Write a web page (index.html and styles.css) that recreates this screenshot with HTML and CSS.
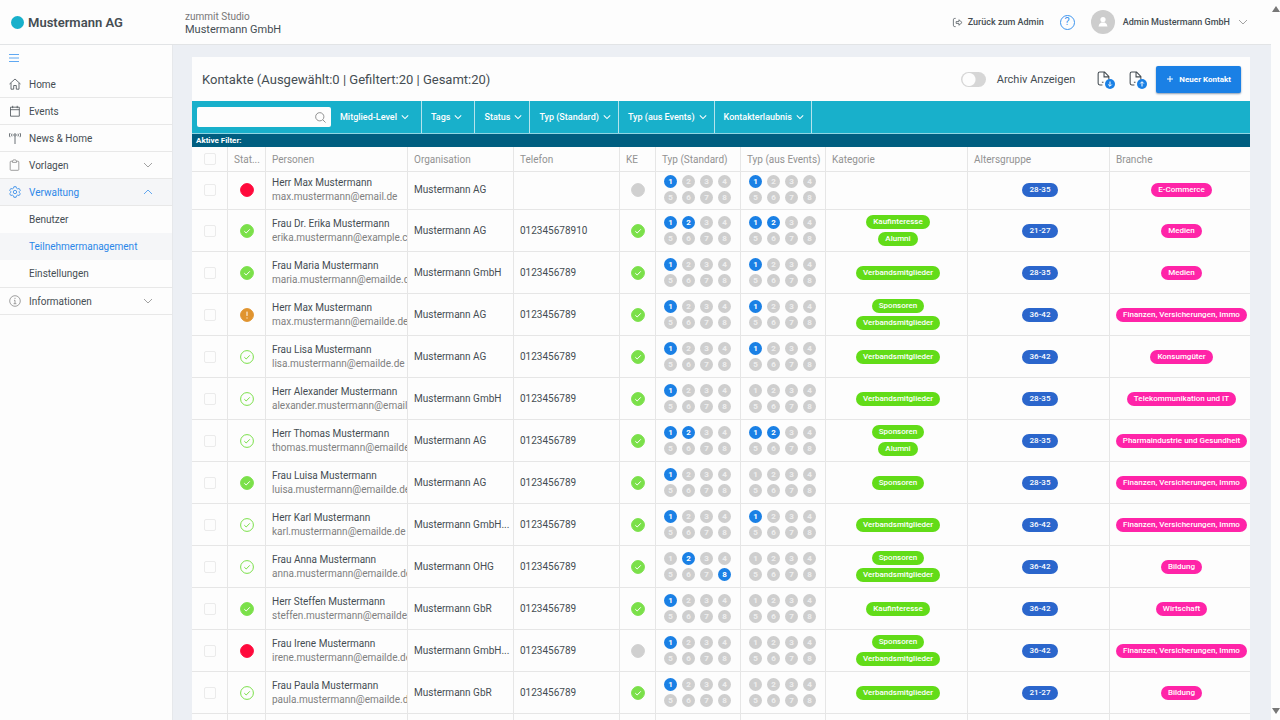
FILE: index.html
```html
<!DOCTYPE html>
<html lang="de">
<head>
<meta charset="utf-8">
<title>Kontakte</title>
<link rel="stylesheet" href="styles.css">
</head>
<body>
<svg class="sprite" aria-hidden="true">
  <symbol id="i-down" viewBox="0 0 10 10"><path d="M1 3l4 4 4-4"/></symbol>
  <symbol id="i-up" viewBox="0 0 10 10"><path d="M1 7l4-4 4 4"/></symbol>
  <symbol id="i-check" viewBox="0 0 14 14"><circle class="ring" cx="7" cy="7" r="6.400"/><path d="M4.300 7.200l1.900 1.800 3.600-3.700"/></symbol>
  <symbol id="i-warn" viewBox="0 0 14 14"><circle class="ring" cx="7" cy="7" r="6.400"/><path d="M7 3.600v4.300M7 9.500v1"/></symbol>
  <symbol id="i-dot" viewBox="0 0 14 14"><circle class="ring" cx="7" cy="7" r="6.400"/></symbol>
  <symbol id="i-file" viewBox="0 0 12 14"><path d="M5 13H2.500Q1 13 1 11.500v-9Q1 1 2.500 1H7l4 4v3M6.500 1v4.500H11M4.500 10.500h1.500"/></symbol>
</svg>
<div class="app">
  <header class="topbar">
    <div class="brand"><span class="brand-dot"></span>Mustermann AG</div>
    <div class="tenant"><span class="tenant-sub">zummit Studio</span><span class="tenant-name">Mustermann GmbH</span></div>
    <a class="back" href="#"><svg class="icon exit" viewBox="0 0 12 12"><path d="M4 1.500H3Q1.500 1.500 1.500 3v6q0 1.500 1.500 1.500h1M4.500 5h3V3L11 6 7.500 9V7h-3z"/></svg>Zurück zum Admin</a>
    <button class="help" type="button" aria-label="Hilfe">?</button>
    <button class="user" type="button">
      <svg class="avatar" viewBox="0 0 24 24"><circle cx="12" cy="12" r="12" fill="#cdcdcd"/><circle cx="12" cy="9.500" r="2.600" fill="#fff"/><path d="M7.500 16.500q.3-3 2.800-4h3.400q2.500 1 2.800 4z" fill="#fff"/></svg>
      Admin Mustermann GmbH
      <svg class="chev" viewBox="0 0 10 10"><use href="#i-down"/></svg>
    </button>
  </header>
  <div class="body">
    <nav class="sidebar">
      <button class="burger" type="button" aria-label="Menü"><svg class="burger-icon" viewBox="0 0 10 10"><path d="M0 1.500h10M0 5h10M0 8.500h10"/></svg></button>
      <a class="item" href="#"><svg class="icon" viewBox="0 0 12 12"><path d="M.5 6L6 1l5.500 5M2 5v6.200h2.700V7.500h2.600v3.700H10V5"/></svg>Home</a>
      <a class="item" href="#"><svg class="icon" viewBox="0 0 12 12"><path d="M1.500 2.200h8.800v9H1.500zM1.500 4.700h8.800M3.700.8v2.400M8.200.8v2.400"/></svg>Events</a>
      <a class="item" href="#"><svg class="icon" viewBox="0 0 12 12"><path d="M6 4.500V12M1 1Q-.3 3 1 5.200M3 1.700q-.8 1.300 0 2.700M11 1q1.300 2 0 4.200M9 1.700q.8 1.300 0 2.700M4.800 3a1.200 1.200 0 1 0 2.400 0 1.200 1.200 0 1 0-2.400 0"/></svg>News &amp; Home</a>
      <a class="item" href="#"><svg class="icon light" viewBox="0 0 12 12"><path d="M3.200 2.200H2Q1.200 2.200 1.200 3v7.500q0 .8.8.8h7q.8 0 .8-.8V3q0-.8-.8-.8H7.800M3.500 3.400V2q0-1.200 2-1.200t2 1.200v1.400z"/></svg>Vorlagen<svg class="chev" viewBox="0 0 10 10"><use href="#i-down"/></svg></a>
      <a class="item active" href="#"><svg class="icon" viewBox="0 0 12 12"><path d="M4.900.7h2.200l.4 1.500 1.200.7 1.500-.4 1.100 1.900L10.200 5.500v1l1.100 1.100-1.100 1.900-1.500-.4-1.200.7-.4 1.500H4.900l-.4-1.500-1.200-.7-1.500.4L.7 7.600l1.100-1.100v-1L.7 4.400l1.100-1.900 1.500.4 1.200-.7z"/><circle cx="6" cy="6" r="1.700"/></svg>Verwaltung<svg class="chev" viewBox="0 0 10 10"><use href="#i-up"/></svg></a>
      <a class="item sub" href="#">Benutzer</a>
      <a class="item sub active" href="#">Teilnehmermanagement</a>
      <a class="item sub" href="#">Einstellungen</a>
      <a class="item top-line" href="#"><svg class="icon light" viewBox="0 0 12 12"><circle cx="6" cy="6" r="5.300"/><path d="M6 2.800v1.200M5 5.300h1v3.300M4.600 8.700h2.800"/></svg>Informationen<svg class="chev" viewBox="0 0 10 10"><use href="#i-down"/></svg></a>
    </nav>
    <main class="main">
      <section class="card">
        <div class="card-head">
          <h1 class="title">Kontakte (Ausgewählt:0 | Gefiltert:20 | Gesamt:20)</h1>
          <label class="archive"><input class="switch" type="checkbox">Archiv Anzeigen</label>
          <div class="files">
            <button class="file" type="button" aria-label="Exportieren"><svg class="file-icon" viewBox="0 0 12 14"><use href="#i-file"/></svg><svg class="file-badge" viewBox="0 0 10 10"><circle cx="5" cy="5" r="5"/><path d="M5 2.500v4.500M3.200 5.500L5 7.300l1.800-1.800"/></svg></button>
            <button class="file" type="button" aria-label="Importieren"><svg class="file-icon" viewBox="0 0 12 14"><use href="#i-file"/></svg><svg class="file-badge" viewBox="0 0 10 10"><circle cx="5" cy="5" r="5"/><path d="M5 7.500V3M3.200 4.500L5 2.700l1.800 1.800"/></svg></button>
          </div>
          <button class="primary" type="button"><svg class="plus" viewBox="0 0 8 8"><path d="M4 1v6M1 4h6"/></svg>Neuer Kontakt</button>
        </div>
        <div class="filters">
          <div class="search"><input class="search-input" type="search" aria-label="Suchen"><svg class="search-icon" viewBox="0 0 12 12"><circle cx="5.200" cy="5.200" r="4.500"/><path d="M8.500 8.500l3 3"/></svg></div>
          <button class="filter roomy" type="button">Mitglied-Level<svg viewBox="0 0 10 10"><use href="#i-down"/></svg></button>
          <button class="filter roomy" type="button">Tags<svg viewBox="0 0 10 10"><use href="#i-down"/></svg></button>
          <button class="filter" type="button">Status<svg viewBox="0 0 10 10"><use href="#i-down"/></svg></button>
          <button class="filter" type="button">Typ (Standard)<svg viewBox="0 0 10 10"><use href="#i-down"/></svg></button>
          <button class="filter" type="button">Typ (aus Events)<svg viewBox="0 0 10 10"><use href="#i-down"/></svg></button>
          <button class="filter" type="button">Kontakterlaubnis<svg viewBox="0 0 10 10"><use href="#i-down"/></svg></button>
        </div>
        <div class="active-filters">Aktive Filter:</div>
        <table class="grid">
          <colgroup><col class="c-check"><col class="c-stat"><col class="c-wide"><col class="c-mid"><col class="c-mid"><col class="c-check"><col class="c-typ"><col class="c-typ"><col class="c-wide"><col class="c-wide"><col class="c-last"></colgroup>
          <thead><tr><th class="center"><input class="check" type="checkbox" aria-label="Alle auswählen"></th><th>Stat...</th><th>Personen</th><th>Organisation</th><th>Telefon</th><th>KE</th><th>Typ (Standard)</th><th>Typ (aus Events)</th><th>Kategorie</th><th>Altersgruppe</th><th>Branche</th></tr></thead>
          <tbody id="rows"></tbody>
        </table>
      </section>
    </main>
  </div>
  <div class="scroll"><svg viewBox="0 0 8 6"><path d="M4 0l4 6H0z"/></svg><svg viewBox="0 0 8 6"><path d="M4 6l4-6H0z"/></svg></div>
</div>
<script src="rows.js"></script>
</body>
</html>
```
FILE: rows.js
```js
const V = 'Verbandsmitglieder', S = 'Sponsoren', A = 'Alumni', K = 'Kaufinteresse';
const FIN = 'Finanzen, Versicherungen, Immo';
// status, name, mail, organisation, phone, permission, standard types, event types, categories, age, branch
const contacts = [
  ['red', 'Herr Max Mustermann', 'max.mustermann@email.de', 'Mustermann AG', '', 0, [1], [1], [], '28-35', 'E-Commerce'],
  ['ok', 'Frau Dr. Erika Mustermann', 'erika.mustermann@example.com', 'Mustermann AG', '012345678910', 1, [1, 2], [1, 2], [K, A], '21-27', 'Medien'],
  ['ok', 'Frau Maria Mustermann', 'maria.mustermann@emailde.de', 'Mustermann GmbH', '0123456789', 1, [1], [1], [V], '28-35', 'Medien'],
  ['warn', 'Herr Max Mustermann', 'max.mustermann@emailde.de', 'Mustermann AG', '0123456789', 1, [1], [1], [S, V], '36-42', FIN],
  ['open', 'Frau Lisa Mustermann', 'lisa.mustermann@emailde.de', 'Mustermann AG', '0123456789', 1, [1], [1], [V], '36-42', 'Konsumgüter'],
  ['open', 'Herr Alexander Mustermann', 'alexander.mustermann@emailde.de', 'Mustermann GmbH', '0123456789', 1, [1], [], [V], '28-35', 'Telekommunikation und IT'],
  ['open', 'Herr Thomas Mustermann', 'thomas.mustermann@emailde.de', 'Mustermann AG', '0123456789', 1, [1, 2], [1, 2], [S, A], '28-35', 'Pharmaindustrie und Gesundheit'],
  ['ok', 'Frau Luisa Mustermann', 'luisa.mustermann@emailde.de', 'Mustermann AG', '0123456789', 1, [1], [], [S], '28-35', FIN],
  ['open', 'Herr Karl Mustermann', 'karl.mustermann@emailde.de', 'Mustermann GmbH...', '0123456789', 1, [1], [1], [V], '36-42', FIN],
  ['open', 'Frau Anna Mustermann', 'anna.mustermann@emailde.de', 'Mustermann OHG', '0123456789', 1, [2, 8], [], [S, V], '36-42', 'Bildung'],
  ['ok', 'Herr Steffen Mustermann', 'steffen.mustermann@emailde.de', 'Mustermann GbR', '0123456789', 1, [1], [], [K], '36-42', 'Wirtschaft'],
  ['red', 'Frau Irene Mustermann', 'irene.mustermann@emailde.de', 'Mustermann GmbH...', '0123456789', 0, [1], [], [S, V], '36-42', FIN],
  ['open', 'Frau Paula Mustermann', 'paula.mustermann@emailde.de', 'Mustermann GbR', '0123456789', 1, [1], [], [V], '21-27', 'Bildung']
];
const shape = { red: 'dot', ok: 'check', open: 'check', warn: 'warn', none: 'dot' };
const mark = kind => `<svg class="mark ${kind}" viewBox="0 0 14 14"><use href="#i-${shape[kind]}"/></svg>`;
const dots = on => `<div class="dots">${[1, 2, 3, 4, 5, 6, 7, 8].map(n => `<span class="dot${on.includes(n) ? ' on' : ''}">${n}</span>`).join('')}</div>`;
const pills = (list, color) => `<div class="pills">${list.map(t => `<span class="pill ${color}">${t}</span>`).join('')}</div>`;
document.getElementById('rows').innerHTML = contacts.map(([st, name, mail, org, tel, ke, std, ev, cat, age, br]) => `<tr>
<td class="center"><input class="check" type="checkbox" aria-label="${name} auswählen"></td>
<td class="center">${mark(st)}</td>
<td><div class="name">${name}</div><div class="mail">${mail}</div></td>
<td>${org}</td><td>${tel}</td>
<td class="center">${mark(ke ? 'ok' : 'none')}</td>
<td>${dots(std)}</td><td>${dots(ev)}</td>
<td class="tags">${pills(cat, 'green')}</td><td class="tags">${pills([age], 'blue')}</td><td class="tags">${pills([br], 'pink')}</td></tr>`).join('') + `<tr>${'<td></td>'.repeat(11)}</tr>`;
```
FILE: styles.css
```css
* { box-sizing: border-box; }
body { margin: 0; font-family: Roboto, "Liberation Sans", sans-serif; font-size: 10px; color: #454d53; background: #fdfdfd; }
button { font: inherit; color: inherit; background: none; border: 0; padding: 0; }
a { color: inherit; text-decoration: none; }
svg { fill: none; stroke: currentColor; flex: none; }
.sprite { display: none; }
.app { display: grid; grid-template: 45px minmax(0, 1fr) / minmax(0, 1fr) 9px; height: 100vh; overflow: hidden; }
.topbar { display: flex; align-items: center; border-bottom: 1px solid #e2e4e6; padding-right: 23px; }
.brand { display: flex; align-items: center; gap: 4px; width: 185px; padding-left: 11px; font-size: 13px; font-weight: 600; }
.brand-dot { width: 13px; height: 13px; border-radius: 50%; background: #18b0cb; }
.tenant { display: flex; flex-direction: column; flex: 1; padding-top: 2px; }
.tenant-sub { font-size: 10px; line-height: 12px; color: #777; }
.tenant-name { font-size: 11px; line-height: 13px; }
.back { display: flex; align-items: center; gap: 5px; font-size: 9px; font-weight: 500; }
.icon { width: 12px; height: 12px; stroke-width: .8; }
.exit { width: 11px; height: 11px; }
.help { width: 15px; height: 15px; margin: 0 16px; border: 1px solid #3d94ee; border-radius: 50%; color: #3d94ee; font-size: 11px; line-height: 12px; text-align: center; }
.user { display: flex; align-items: center; gap: 8px; font-size: 9px; font-weight: 500; }
.avatar { width: 24px; height: 24px; stroke: none; }
.chev { width: 10px; height: 10px; color: #8a8a8a; stroke: #8a8a8a; stroke-width: .8; }
.body { display: grid; grid-template-columns: 173px minmax(0, 1fr); overflow: hidden; grid-row: 2; }
.sidebar { border-right: 1px solid #e6e8eb; }
.burger { display: flex; align-items: center; width: 100%; height: 26px; padding-left: 9px; color: #5fa8f2; }
.burger-icon { width: 10px; height: 10px; }
.item { display: flex; align-items: center; gap: 8px; height: 27px; padding: 0 19px 0 9px; border-bottom: 1px solid #e8e8e8; }
.item .chev { margin-left: auto; }
.light { color: #888; }
.item.active { background: #f5f6f8; color: #2b87e8; }
.item.active .chev { stroke: #3d94ee; }
.sub { padding-left: 29px; border-bottom-color: transparent; }
.top-line { height: 28px; border-top: 1px solid #e8e8e8; }
.main { padding: 12px 21px 0 19px; background: #eceff4; overflow: hidden; }
.card { background: #fdfdfd; min-height: 100%; }
.card-head { display: flex; align-items: center; height: 44px; padding: 0 9px 0 10px; }
.title { flex: 1; margin: 0; font-size: 13px; font-weight: 400; }
.archive { display: flex; align-items: center; gap: 11px; margin-right: 22px; font-size: 11px; }
.switch { appearance: none; width: 25px; height: 15px; margin: 0; border-radius: 8px; background: radial-gradient(circle at 8px 50%, #fdfdfd 6px, #d6d6d6 7px); }
.files { display: flex; gap: 14px; margin-right: 9px; }
.file { position: relative; width: 18px; height: 18px; }
.file-icon { position: absolute; left: 0; top: 1px; width: 13px; height: 15px; }
.file-badge { position: absolute; right: 0; bottom: -1px; width: 10px; height: 10px; stroke: #fff; }
.file-badge circle { fill: #1a80e5; stroke: none; }
.primary { display: flex; align-items: center; justify-content: center; gap: 5px; height: 27px; padding: 0 10px; border-radius: 2px; background: #1a80e5; color: #fff; font-size: 8px; font-weight: 700; box-shadow: 0 1px 2px #8a9bb0; }
.plus { width: 8px; height: 8px; }
.filters { display: flex; align-items: center; height: 33px; padding-left: 5px; background: #18b0cb; border-bottom: 1px solid #8fd6e3; color: #fff; }
.search { position: relative; width: 134px; }
.search-input { display: block; width: 100%; height: 20px; border: 0; border-radius: 2px; background: #fdfdfd; padding: 0 20px 0 6px; font: inherit; }
.search-icon { position: absolute; right: 5px; top: 5px; width: 11px; height: 11px; stroke: #888; }
.filter { display: flex; align-items: center; gap: 4px; height: 100%; padding: 0 7px 0 9px; border-right: 1px solid #b5e3ec; font-weight: 500; font-size: 9px; }
.filter.roomy { padding-right: 12px; }
.filter svg { width: 8px; height: 8px; stroke-width: 1.3; }
.active-filters { height: 13px; padding-left: 4px; background: #005e80; color: #fff; font-size: 8px; font-weight: 700; line-height: 13px; }
.grid { width: 100%; table-layout: fixed; border-collapse: separate; border-spacing: 0; }
.c-check { width: 36px; } .c-stat { width: 38px; } .c-wide { width: 142px; } .c-mid { width: 106px; } .c-typ { width: 85px; } .c-last { width: 140px; }
th, td { padding: 0 0 0 6px; border-right: 1px solid #e6e6e6; border-bottom: 1px solid #e6e6e6; white-space: nowrap; overflow: hidden; }
th:last-child, td:last-child { border-right: 0; }
th { height: 25px; color: #929292; font-weight: 400; text-align: left; }
td { height: 42px; }
tbody tr:first-child td { height: 38px; padding-bottom: 2px; }
.center { padding-left: 1px; text-align: center; }
td.tags { padding-left: 3px; }
.check { appearance: none; width: 12px; height: 12px; margin: 0; border: 1px solid #ebebeb; border-radius: 2px; vertical-align: middle; }
.name, .mail { line-height: 14px; }
.mail { color: #808080; }
.mark { width: 14px; height: 14px; vertical-align: middle; stroke: #fff; }
.ring { stroke: var(--ring); }
.ok { --ring: #7be04a; fill: #7be04a; }
.open { --ring: #7be04a; fill: none; stroke: #7be04a; }
.red { --ring: #ff0a3c; fill: #ff0a3c; }
.warn { --ring: #e0942f; fill: #e0942f; }
.none { --ring: #d0d0d0; fill: #d0d0d0; }
.dots { display: grid; grid-template-columns: repeat(4, 13px); gap: 3px 5px; padding-left: 2px; }
.dot { height: 13px; border-radius: 50%; background: #cecece; color: #eee; font-size: 8px; font-weight: 700; line-height: 13px; text-align: center; }
.dot.on { background: #1a80e5; color: #fff; }
.pills { display: flex; flex-direction: column; align-items: center; gap: 3px; }
.pill { height: 14px; padding: 0 7px; border-radius: 7px; color: #fff; font-size: 8px; font-weight: 500; line-height: 14px; }
.blue { padding: 0 8px; }
.green { background: #62dc18; }
.blue { background: #2b66cc; }
.pink { background: #ff24a8; }
.scroll { grid-area: 1 / 2 / 3 / 3; display: flex; flex-direction: column; justify-content: space-between; align-items: center; padding: 6px 0; background: #fdfdfd; }
.scroll svg { width: 8px; height: 6px; fill: #777; stroke: none; }
```
